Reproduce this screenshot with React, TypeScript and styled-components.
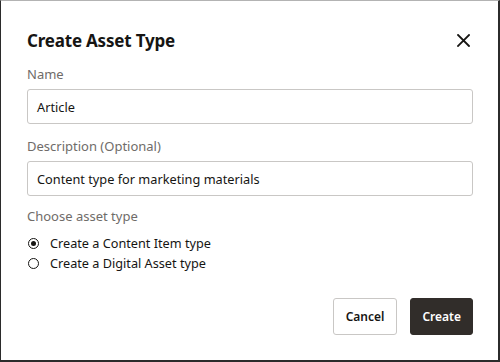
import React from "react";
import styled, { createGlobalStyle } from "styled-components";

const Global = createGlobalStyle`
  html, body { margin: 0; padding: 0; background: #ffffff; }
  body { font-family: "Noto Sans", "Open Sans", sans-serif; }
  * { box-sizing: border-box; }
`;

const Dialog = styled.div`
  width: 500px;
  height: 362px;
  background: #fff;
  border-top: 1px solid #b3b3b3;
  border-left: 1px solid #2b2b2b;
  border-right: 2px solid #2b2b2b;
  border-bottom: 2px solid #2b2b2b;
  padding: 0 25px 0 26px;
  display: flex;
  flex-direction: column;
`;

const Header = styled.div`
  display: flex;
  align-items: center;
  justify-content: space-between;
  height: 54px;
  padding-top: 25px;
`;

const Title = styled.h1`
  margin: 0;
  font-size: 17px;
  font-weight: 700;
  color: #161513;
  letter-spacing: -0.2px;
`;

const CloseButton = styled.button`
  width: 20px;
  height: 20px;
  padding: 0;
  border: 0;
  background: transparent;
  display: flex;
  align-items: center;
  justify-content: center;
  margin-right: 0;
`;

const Label = styled.div`
  font-size: 13px;
  color: #6f6c69;
  line-height: 18px;
`;

const Field = styled.div<{ $top: number }>`
  display: flex;
  flex-direction: column;
  gap: 6px;
  margin-top: ${(p) => p.$top}px;
`;

const Input = styled.div`
  height: 35px;
  border: 1px solid #c9c7c5;
  border-radius: 3px;
  padding: 0 9px;
  display: flex;
  align-items: center;
  font-size: 12.75px;
  color: #161513;
`;

const RadioGroup = styled.div`
  display: flex;
  flex-direction: column;
  margin-top: 2px;
`;

const RadioRow = styled.label`
  display: flex;
  align-items: center;
  gap: 11px;
  font-size: 12.7px;
  color: #161513;
  line-height: 20px;
`;

const RadioDot = styled.span<{ $checked: boolean }>`
  width: 11px;
  height: 11px;
  border-radius: 50%;
  border: 1.5px solid #161513;
  margin-left: 1px;
  display: flex;
  align-items: center;
  justify-content: center;
  &::after {
    content: "";
    display: ${(p) => (p.$checked ? "block" : "none")};
    width: 5px;
    height: 5px;
    border-radius: 50%;
    background: #161513;
  }
`;

const Footer = styled.div`
  display: flex;
  justify-content: flex-end;
  gap: 13px;
  margin-top: auto;
  margin-bottom: 25px;
`;

const Button = styled.button<{ $primary?: boolean }>`
  height: 37px;
  padding: 0 ${(p) => (p.$primary ? 11 : 12)}px;
  border-radius: 3px;
  font-family: "Noto Sans", sans-serif;
  font-size: 12px;
  font-weight: 600;
  border: 1px solid ${(p) => (p.$primary ? "#312d2a" : "#c9c7c5")};
  background: ${(p) => (p.$primary ? "#312d2a" : "#ffffff")};
  color: ${(p) => (p.$primary ? "#ffffff" : "#161513")};
`;

export default function App() {
  return (
    <>
      <Global />
      <Dialog>
        <Header>
          <Title>Create Asset Type</Title>
          <CloseButton aria-label="Close">
            <svg width="13" height="13" viewBox="0 0 13 13">
              <path d="M1 1 L12 12 M12 1 L1 12" stroke="#161513" strokeWidth="1.8" strokeLinecap="square" />
            </svg>
          </CloseButton>
        </Header>
        <Field $top={10}>
          <Label>Name</Label>
          <Input>Article</Input>
        </Field>
        <Field $top={13}>
          <Label>Description (Optional)</Label>
          <Input>Content type for marketing materials</Input>
        </Field>
        <Field $top={11}>
          <Label>Choose asset type</Label>
          <RadioGroup>
            <RadioRow>
              <RadioDot $checked />
              Create a Content Item type
            </RadioRow>
            <RadioRow>
              <RadioDot $checked={false} />
              Create a Digital Asset type
            </RadioRow>
          </RadioGroup>
        </Field>
        <Footer>
          <Button>Cancel</Button>
          <Button $primary>Create</Button>
        </Footer>
      </Dialog>
    </>
  );
}
